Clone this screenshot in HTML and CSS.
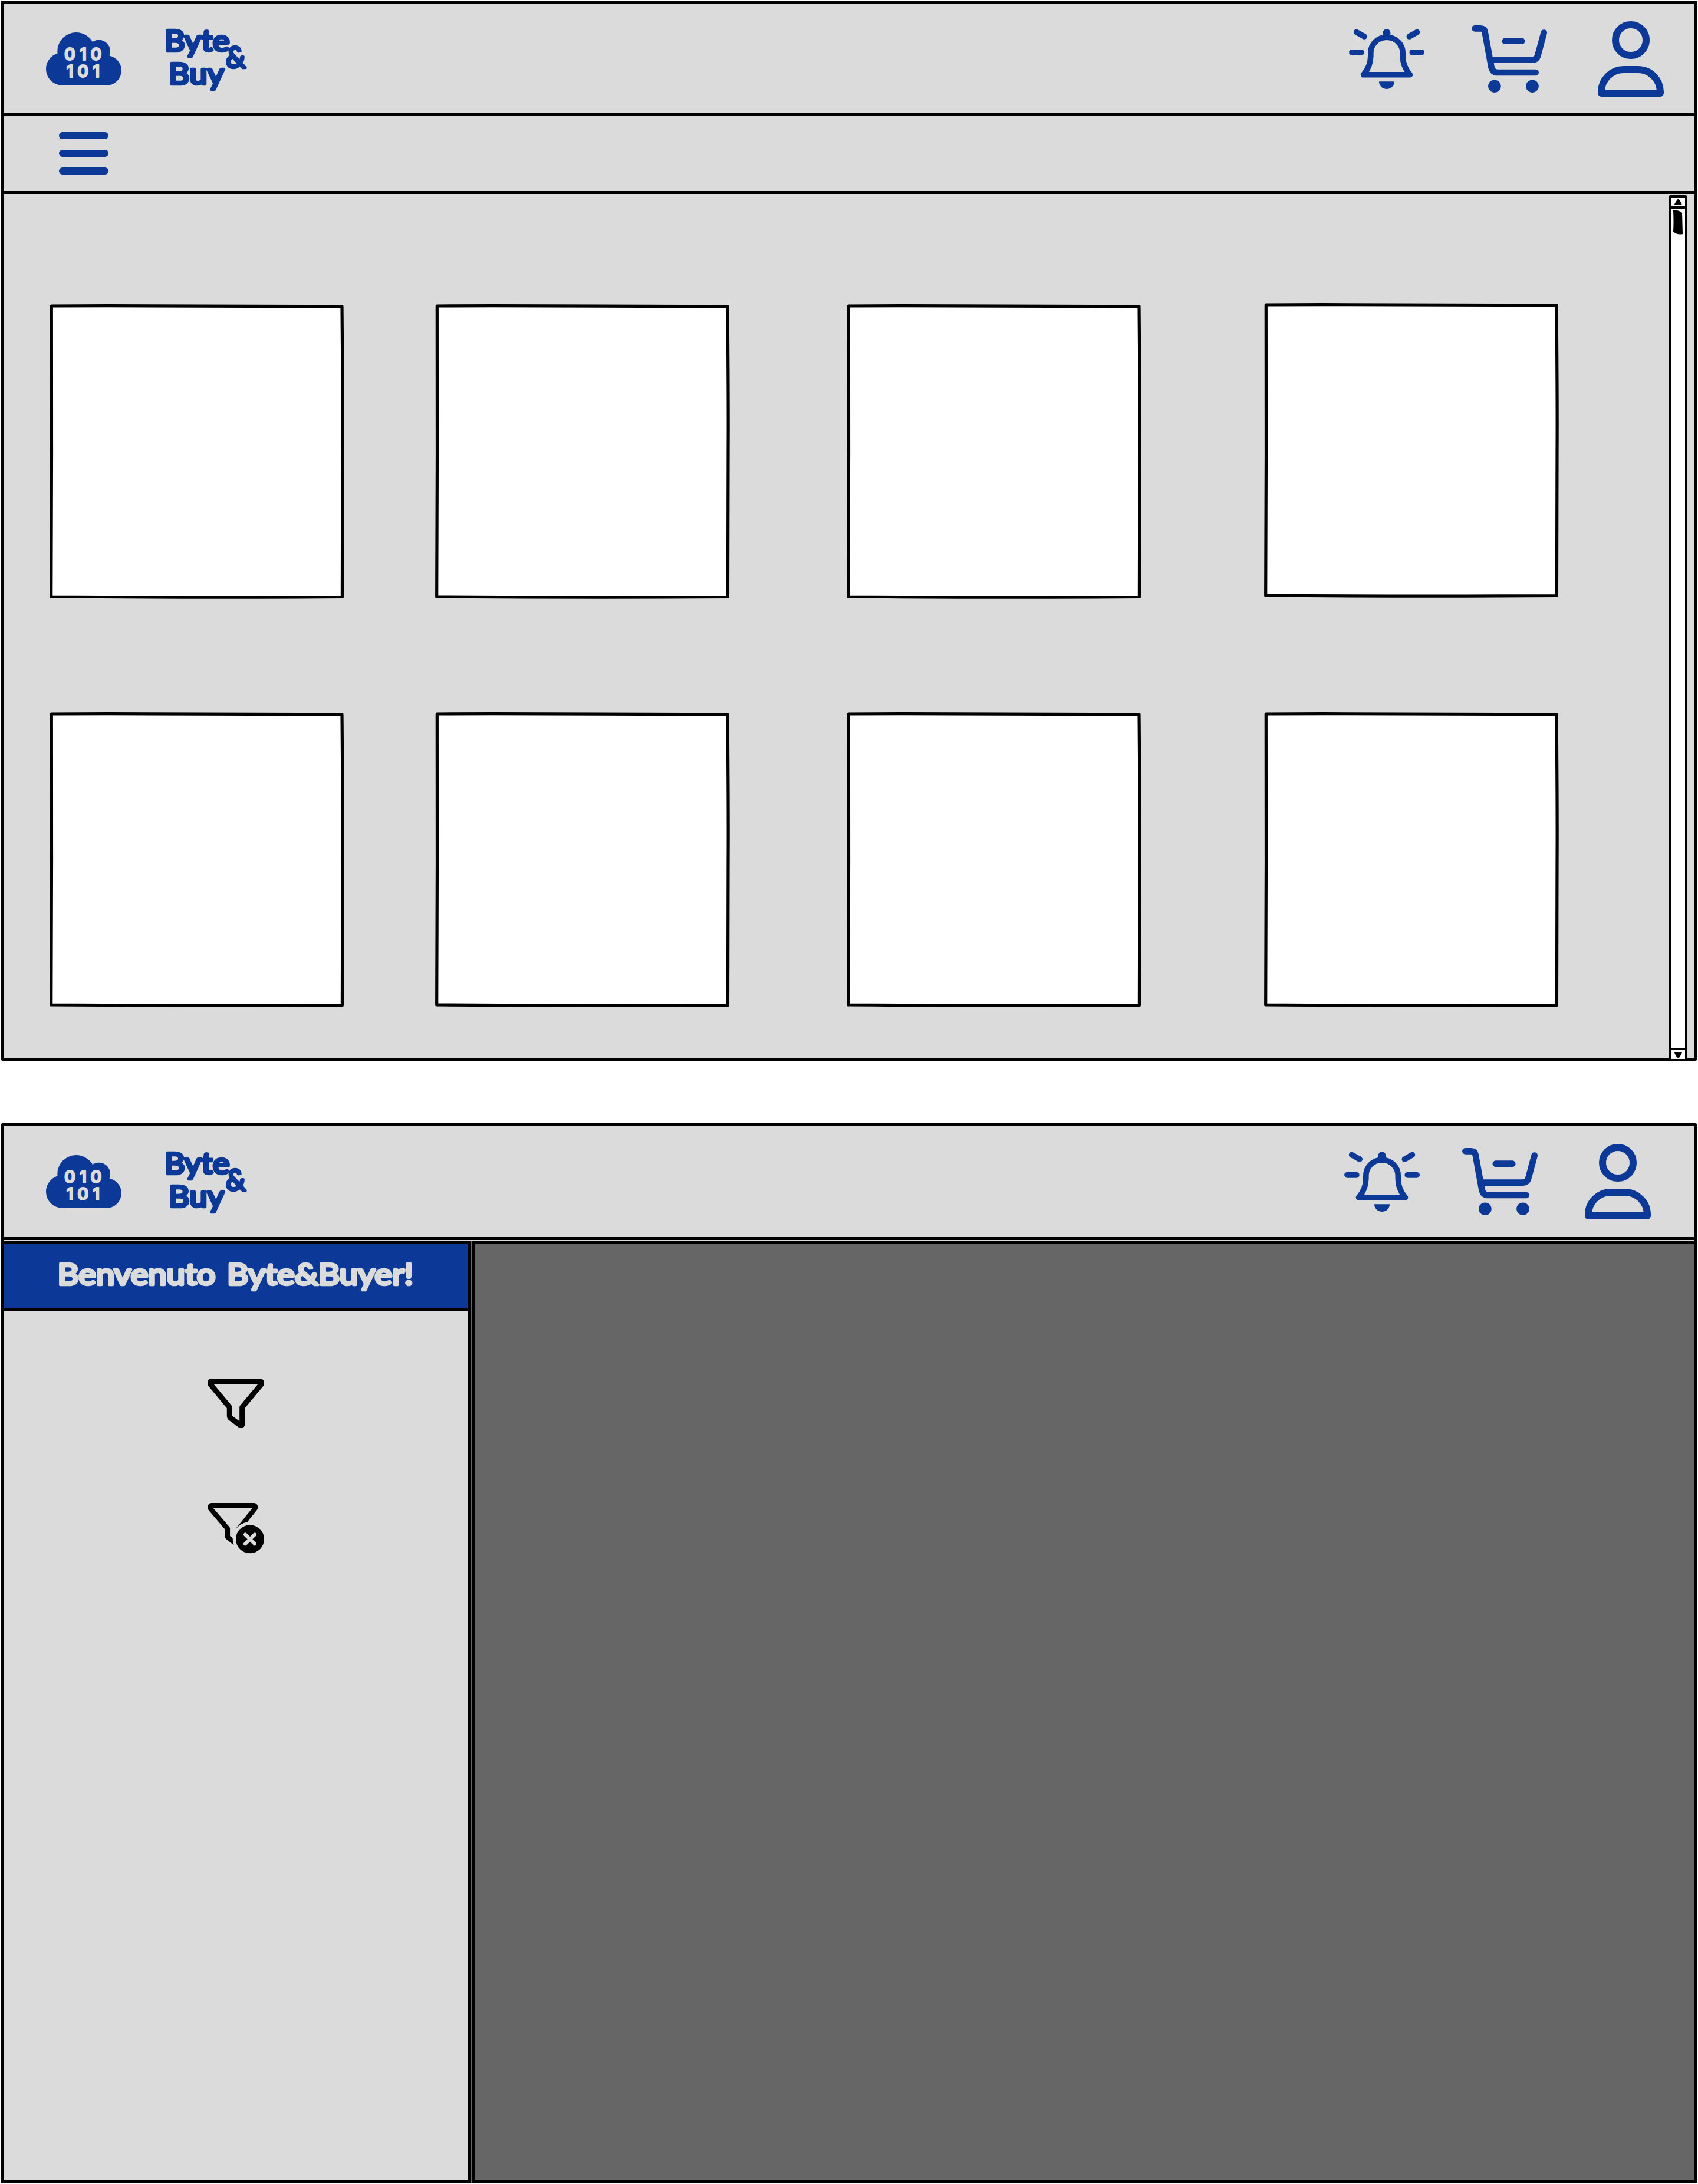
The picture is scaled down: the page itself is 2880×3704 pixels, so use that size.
FILE: index.html
```html
<!DOCTYPE html>
<html lang="it">
<head>
<meta charset="utf-8">
<title>Byte&amp;Buy</title>
<link rel="stylesheet" href="styles.css">
</head>
<body>
<svg class="defs" aria-hidden="true">
  <symbol id="cloud" viewBox="0 6 270 185">
    <g class="fill">
      <circle cx="106" cy="117" r="28"/><circle cx="129.3" cy="87" r="32"/><circle cx="167.7" cy="87" r="19.3"/><circle cx="180.5" cy="119.5" r="25.5"/>
      <path d="M106 87H170L180.5 94V145H106Z"/>
    </g>
  </symbol>
  <symbol id="bell" viewBox="0 6 128 185">
    <g class="line">
      <path stroke-width="9.6" d="M64 63.2C49 63.2 36.8 75 36.8 90V95C36.8 107 33 117 24.5 126.8H103.5C95 117 91.3 107 91.3 95V90C91.3 75 79 63.2 64 63.2Z"/>
      <path stroke-width="12.7" d="M64 55.4V60"/>
      <path stroke-width="9.7" d="M4.9 88.8H20.9M107.2 88.8H123.2M12.7 54.5L26.1 62M115.4 54.5L102.4 62"/>
    </g>
    <path class="fill" d="M51 138.3H77A13 12.8 0 0 1 51 138.3Z"/>
  </symbol>
  <symbol id="cart" viewBox="0 6 128 185">
    <path class="line" stroke-width="10.7" d="M5.4 48.3H15C19.5 48.3 22 50.5 22.6 54.5L33.3 113C34.5 119.5 38 123 44 123H108.6M31.5 101.7H102C108 101.7 111.5 98.5 112.6 93L122.7 55.5M56.8 69.7H85.2"/>
    <g class="fill"><circle cx="38.9" cy="146.2" r="10.8"/><circle cx="103" cy="146.2" r="10.8"/></g>
  </symbol>
  <symbol id="user" viewBox="0 6 112 185">
    <g class="line" stroke-width="12">
      <circle cx="56" cy="68" r="26"/>
      <path d="M44 118H68A38 38 0 0 1 106 156V158H6V156A38 38 0 0 1 44 118Z"/>
    </g>
  </symbol>
  <symbol id="card" viewBox="0 0 504 504">
    <path class="sheet" d="M3.3 4C170 3 340 4 496 4.8Q497.5 170 497 250T496.4 497.5Q250 499 2.7 497Q3 380 3.5 250Q3.7 120 3.3 4Z"/>
  </symbol>
</svg>

<section class="frame catalog">
  <header class="topbar">
    <svg class="brand" viewBox="0 6 270 185">
      <use href="#cloud" y="6" width="270" height="185"/>
      <text x="109" y="102">010</text>
      <text x="112.5" y="131.3">101</text>
    </svg>
    <svg class="wordmark" viewBox="270 6 160 185">
      <text x="278.5" y="86.7" textLength="111" lengthAdjust="spacingAndGlyphs">Byte</text>
      <text x="286" y="142.7" textLength="94" lengthAdjust="spacingAndGlyphs">Buy</text>
      <text x="383" y="114.7" textLength="34" lengthAdjust="spacingAndGlyphs">&amp;</text>
    </svg>
    <nav class="actions">
      <svg class="icon"><use href="#bell"/></svg>
      <svg class="icon"><use href="#cart"/></svg>
      <svg class="icon user"><use href="#user"/></svg>
    </nav>
  </header>
  <div class="menubar"><div class="burger"><i></i><i></i><i></i></div></div>
  <main class="body">
    <div class="grid">
      <svg class="card"><use href="#card"/></svg><svg class="card"><use href="#card"/></svg><svg class="card"><use href="#card"/></svg><svg class="card raised"><use href="#card"/></svg>
      <svg class="card"><use href="#card"/></svg><svg class="card"><use href="#card"/></svg><svg class="card"><use href="#card"/></svg><svg class="card"><use href="#card"/></svg>
    </div>
    <div class="scrollbar">
      <svg class="arrow" viewBox="0 0 24 15"><path d="M5.5 12.5Q8 7 12 2.5Q15 3 19 12.5Z"/></svg>
      <div class="track"><svg class="thumb" viewBox="0 0 16 42"><path d="M0 1Q9 0 15 5L16 41Q7 43 0 37Q1 20 0 1Z"/></svg></div>
      <svg class="arrow" viewBox="0 0 24 15"><path d="M5.5 3H19.5Q17 9 13.5 13.5Q9 13 5.5 3Z"/></svg>
    </div>
  </main>
</section>

<section class="frame shop">
  <header class="topbar">
    <svg class="brand" viewBox="0 6 270 185">
      <use href="#cloud" y="6" width="270" height="185"/>
      <text x="109" y="102">010</text>
      <text x="112.5" y="131.3">101</text>
    </svg>
    <svg class="wordmark" viewBox="270 6 160 185">
      <text x="278.5" y="86.7" textLength="111" lengthAdjust="spacingAndGlyphs">Byte</text>
      <text x="286" y="142.7" textLength="94" lengthAdjust="spacingAndGlyphs">Buy</text>
      <text x="383" y="114.7" textLength="34" lengthAdjust="spacingAndGlyphs">&amp;</text>
    </svg>
    <nav class="actions">
      <svg class="icon"><use href="#bell"/></svg>
      <svg class="icon"><use href="#cart"/></svg>
      <svg class="icon user"><use href="#user"/></svg>
    </nav>
  </header>
  <div class="columns">
    <aside class="sidebar">
      <div class="welcome">
        <svg class="greeting" viewBox="0 0 620 109">
          <text x="7.5" y="69" textLength="268" lengthAdjust="spacingAndGlyphs">Benvenuto</text>
          <text x="295" y="69" textLength="316" lengthAdjust="spacingAndGlyphs">Byte&amp;Buyer!</text>
        </svg>
      </div>
      <svg class="filter" viewBox="0 0 96 86">
        <path class="funnel" stroke-width="9" d="M7.5 4.5H88.5C91.5 4.5 92.8 7.5 91 9.8L58.7 48.7V77.5C58.7 79.5 57 80 55.5 79L38.5 66.5Q37.3 65.5 37.3 64V48.7L5 9.8C3.2 7.5 4.5 4.5 7.5 4.5Z"/>
      </svg>
      <svg class="filter" viewBox="0 0 96 86">
        <path class="funnel" stroke-width="8.2" d="M34 58V43.5L5 9.5C3.2 7.3 4.5 4.2 7.2 4.2H78.2C81 4.2 82.3 7.3 80.5 9.5L52 45M34 43V58L52 72"/>
        <circle class="gap" cx="72" cy="61.3" r="29.3"/>
        <circle cx="72" cy="61.3" r="24"/>
        <path class="cross" d="M64 53.5L80 69.3M80 53.5L64 69.3"/>
      </svg>
    </aside>
    <main class="panel"></main>
  </div>
</section>
</body>
</html>
```
FILE: styles.css
```css
:root {
  --blue: #0c3998;
  --light: #dbdbdb;
}
* { box-sizing: border-box; }
body { margin: 0; background: #fff; }
svg { display: block; flex: none; }
.defs { width: 0; height: 0; position: absolute; }

.frame {
  width: 2878px;
  margin-left: 1px;
  border: 5px solid #000;
  border-radius: 4px;
  background: var(--light);
  display: flex;
  flex-direction: column;
}
.catalog { height: 1798px; margin-top: 1px; }
.shop { height: 1798px; margin-top: 106px; }

.topbar { height: 190px; border-bottom: 5px solid #000; display: flex; flex: none; }
.shop .topbar { height: 193px; }
.brand { width: 270px; height: 185px; margin-left: -6px; }
.wordmark { width: 160px; height: 185px; }
.actions { display: flex; margin-left: auto; margin-right: 52px; gap: 80px; }
.icon { width: 128px; height: 185px; }
.icon.user { width: 112px; margin-left: 6px; }
.shop .actions { margin-right: 74px; gap: 72px; }
.shop .icon.user { margin-left: 8px; }

.fill { fill: var(--blue); }
.line { fill: none; stroke: var(--blue); stroke-linecap: round; stroke-linejoin: round; }
.brand text {
  font: 700 28px Inter, sans-serif;
  letter-spacing: 6.8px;
  fill: var(--light);
  stroke: var(--light);
  stroke-width: 1.8px;
  stroke-linejoin: round;
}
.wordmark text, .greeting text {
  font: 400 50.5px Lato, sans-serif;
  fill: var(--blue);
  stroke: var(--blue);
  stroke-width: 4.6px;
  stroke-linejoin: round;
}
.greeting text { fill: var(--light); stroke: var(--light); }

.menubar { height: 133px; flex: none; border-bottom: 5px solid #000; padding: 28px 94px; }
.burger { width: 84px; display: flex; flex-direction: column; gap: 18px; }
.burger i { height: 12px; border-radius: 6px; background: var(--blue); }

.body { flex: 1; display: flex; justify-content: space-between; }
.grid {
  display: grid;
  grid-template-columns: 654px 698px 708px 504px;
  grid-auto-rows: 692px;
  padding: 186px 0 0 78px;
  height: 1465px;
}
.card { width: 504px; height: 504px; }
.card.raised { margin-top: -2px; }
.sheet { fill: #fff; stroke: #000; stroke-width: 5.2px; stroke-linejoin: round; }

.scrollbar {
  width: 32px;
  height: 1469px;
  margin: 2px 12px 0 0;
  border: 4px solid #000;
  border-radius: 4px;
  background: #fff;
  display: flex;
  flex-direction: column;
}
.arrow { width: 24px; height: 15px; }
.track { flex: 1; border: solid #000; border-width: 4px 0; padding: 2px 4px; }
.thumb { width: 16px; height: 42px; }

.columns { flex: 1; display: flex; gap: 2px; margin: 2px -5px -5px; background: #666; }
.sidebar {
  width: 798px;
  border: 5px solid #000;
  background: var(--light);
  display: flex;
  flex-direction: column;
  align-items: center;
}
.welcome {
  align-self: stretch;
  height: 114px;
  background: var(--blue);
  border-bottom: 5px solid #000;
  display: flex;
  justify-content: center;
}
.greeting { width: 620px; height: 109px; }
.filter { width: 96px; height: 86px; margin-top: 114px; }
.filter + .filter { margin-top: 125px; }
.funnel { fill: none; stroke: #000; stroke-linejoin: round; }
.gap { fill: var(--light); }
.cross { stroke: var(--light); stroke-width: 6px; stroke-linecap: round; }
.panel { flex: 1; border: 5px solid #000; background: #666; }
```
